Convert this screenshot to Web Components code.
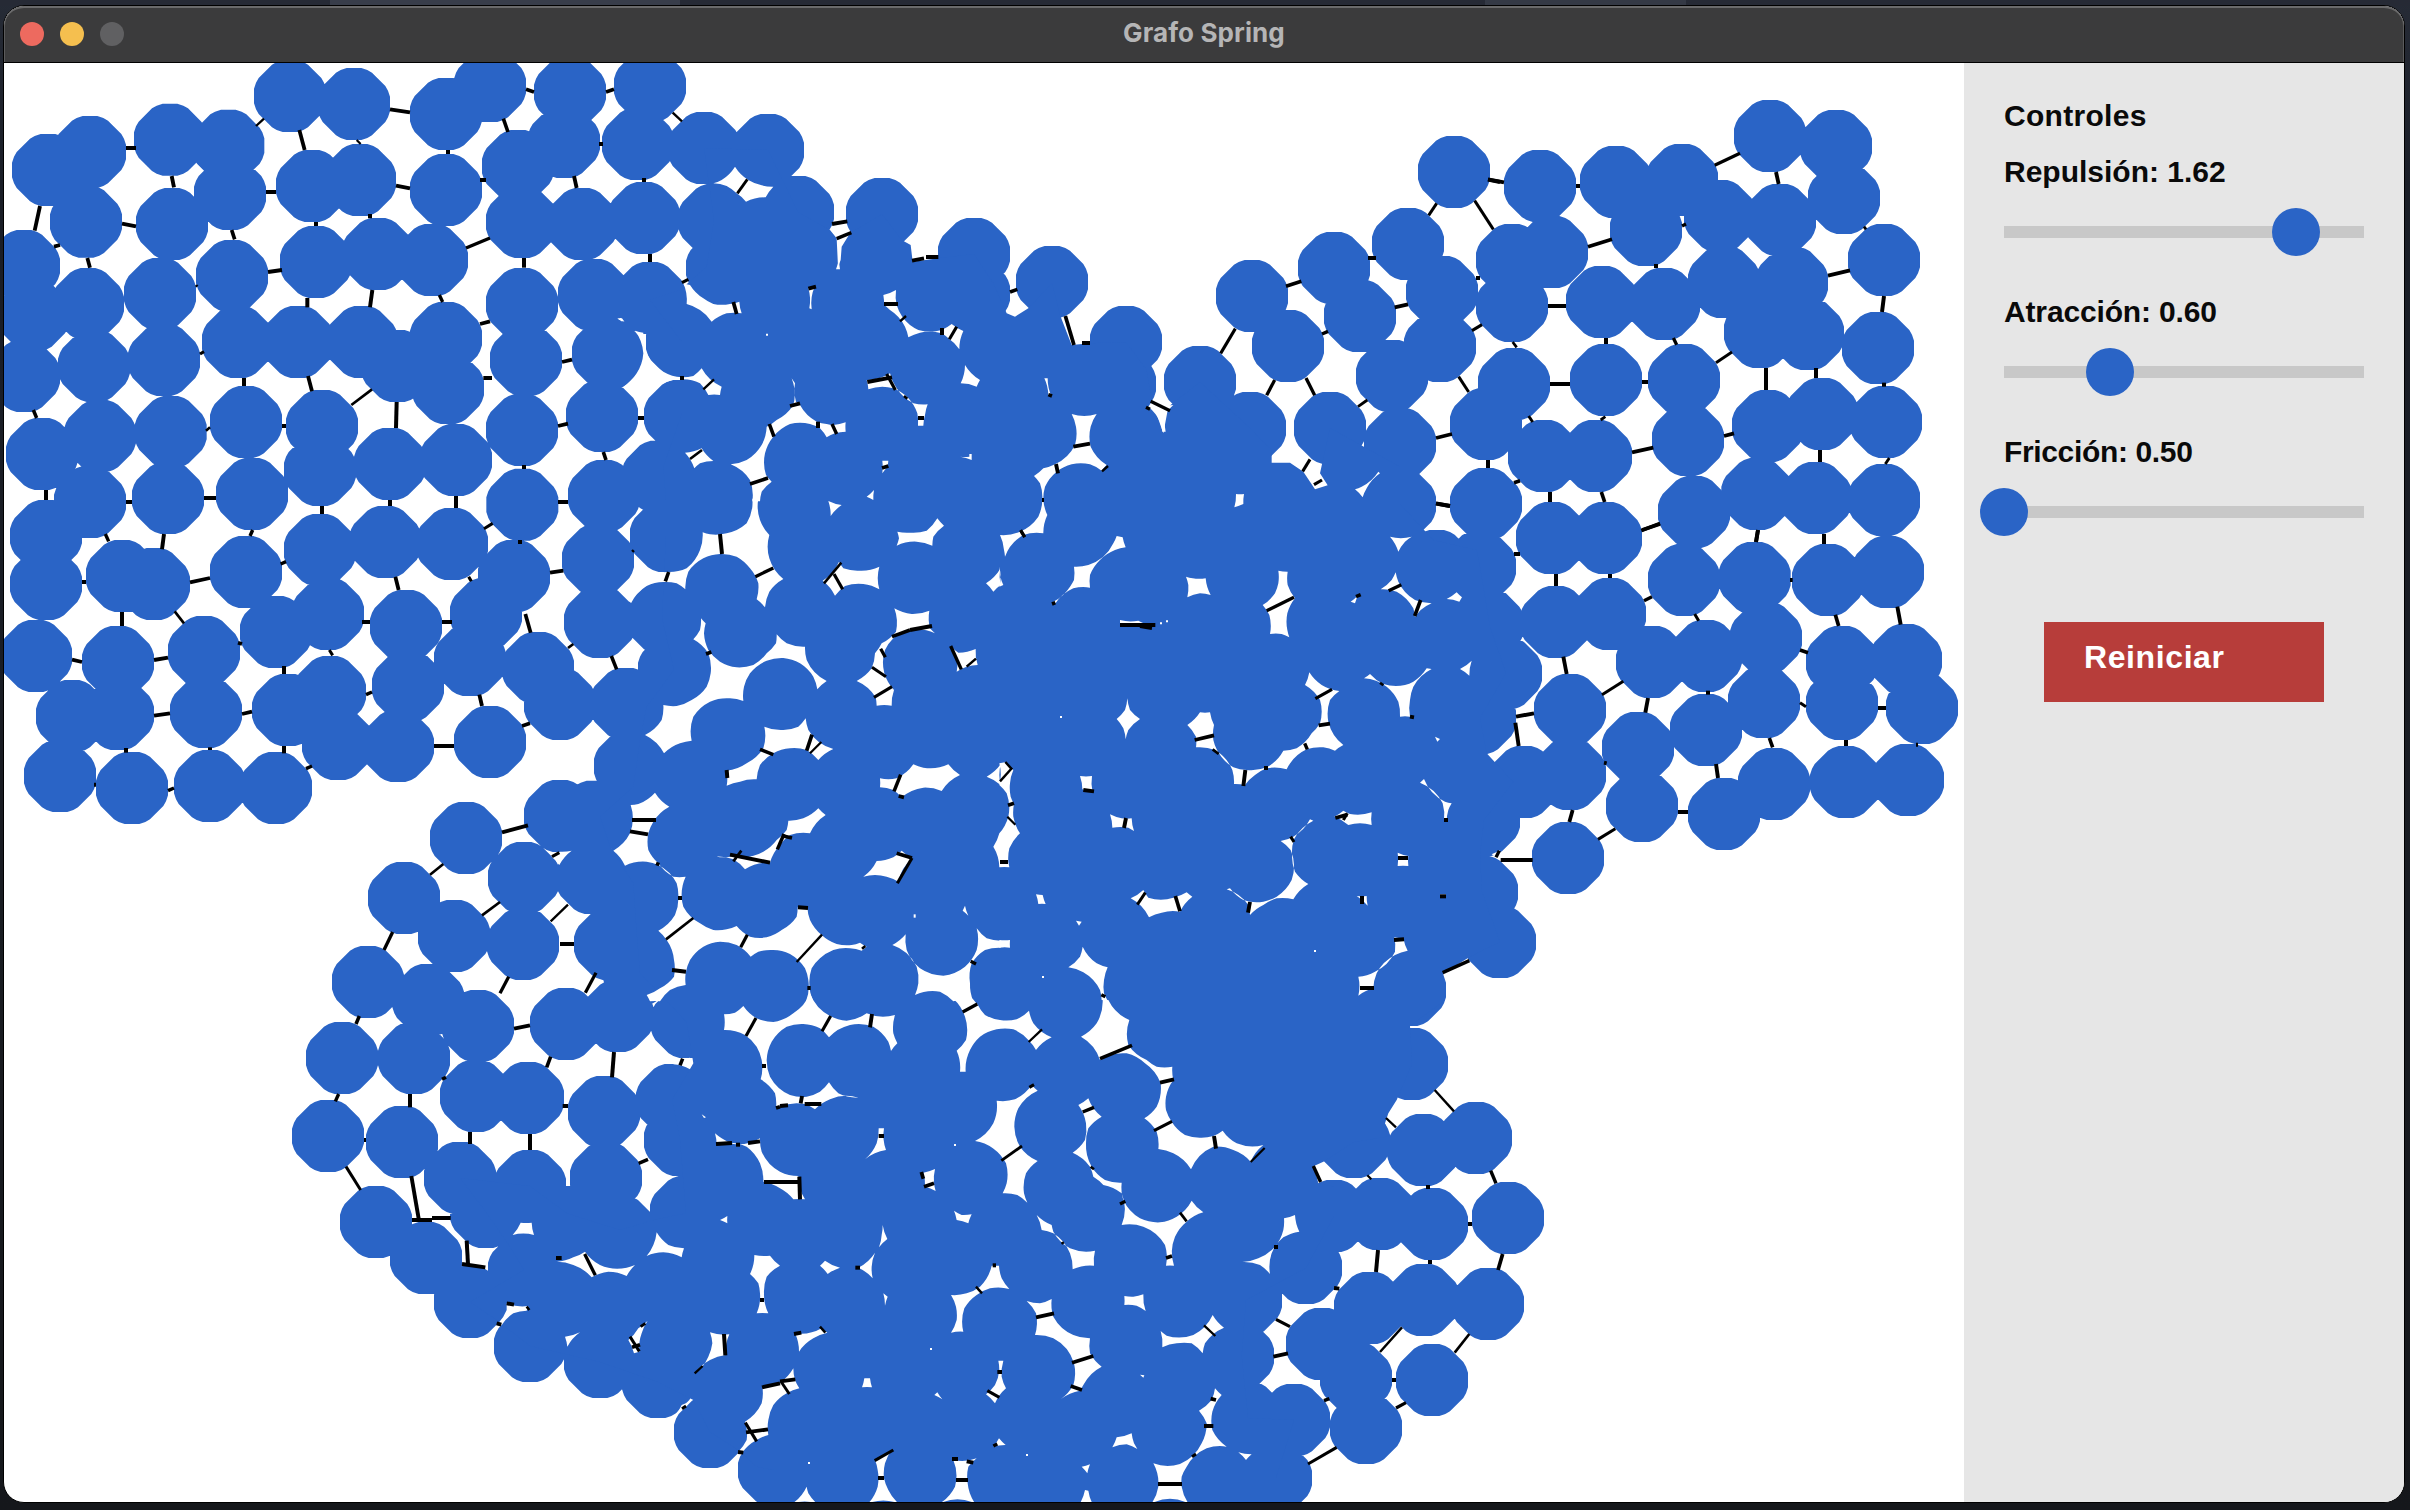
<!DOCTYPE html>
<html lang="es">
<head>
<meta charset="utf-8">
<title>Grafo Spring</title>
<style>
html,body{margin:0;height:100%;overflow:hidden}
body{background:#15171b;font-family:"Liberation Sans",Arial,sans-serif}
</style>
</head>
<body>
<app-desktop>
  <app-window heading="Grafo Spring">
    <spring-graph></spring-graph>
    <control-panel heading="Controles">
      <range-slider label="Repulsión" value="1.62" ratio="0.811"></range-slider>
      <range-slider label="Atracción" value="0.60" ratio="0.295" style="letter-spacing:-.15px"></range-slider>
      <range-slider label="Fricción" value="0.50" ratio="0" style="letter-spacing:-.35px"></range-slider>
      <reset-button>Reiniciar</reset-button>
    </control-panel>
  </app-window>
</app-desktop>
<script>
class Base extends HTMLElement {
  constructor() {
    super();
    this.attachShadow({ mode: 'open' });
  }
  connectedCallback() { this.shadowRoot.innerHTML = this.render(); }
}

customElements.define('app-desktop', class extends Base {
  render() {
    return `<style>
      :host{display:block;box-sizing:border-box;width:2410px;height:1510px;padding:5px 5px 7px 3px;overflow:hidden;
        background:
          linear-gradient(90deg,#262a35 330px,#383d4a 330px,#383d4a 680px,#262a35 680px,#262a35 1485px,#343945 1485px,#343945 1686px,#262a35 1686px) 0 0/100% 6px no-repeat,
          linear-gradient(#262b36,#1a1e27 12%,#191c22 60%,#15171b)}
    </style><slot></slot>`;
  }
});

customElements.define('app-window', class extends Base {
  render() {
    return `<style>
      :host{display:flex;flex-direction:column;box-sizing:border-box;width:2402px;height:1498px;border:1px solid #000;
        border-radius:21px;overflow:hidden;background:#fff}
      header{display:grid;grid-template-columns:1fr auto 1fr;align-items:center;height:57px;flex:none;box-sizing:border-box;
        background:#3b3b3c;border-bottom:1px solid #000;box-shadow:inset 0 2px 0 #6a6a6b,inset 1px 0 0 #5b5b5c,inset -1px 0 0 #5b5b5c;
        border-radius:20px 20px 0 0}
      .lights{display:flex;gap:16px;padding-left:16px}
      i{width:24px;height:24px;border-radius:50%;background:#ed6a5f}
      i+i{background:#f5bf4f} i+i+i{background:#606062}
      h1{margin:0;padding-bottom:2px;font:700 26px/30px Inter,sans-serif;letter-spacing:.1px;color:#b5b5b6}
      main{display:flex;flex:1;min-height:0}
    </style>
    <header><div class="lights"><i></i><i></i><i></i></div><h1>${this.getAttribute('heading')}</h1><span></span></header>
    <main><slot></slot></main>`;
  }
});

customElements.define('control-panel', class extends Base {
  render() {
    return `<style>
      :host{display:flex;flex-direction:column;flex:1;box-sizing:border-box;padding:35px 39px 0 40px;background:#e6e6e6}
      h2{margin:0 0 20px;font:bold 30px/36px "Liberation Sans",Arial,sans-serif;letter-spacing:.3px;color:#0a0a0a}
    </style><h2>${this.getAttribute('heading')}</h2><slot></slot>`;
  }
});

customElements.define('range-slider', class extends Base {
  render() {
    const pos = Number(this.getAttribute('ratio')) * 100;
    return `<style>
      :host{display:block;width:360px;margin-bottom:56px}
      label{display:block;font:bold 30px/36px "Liberation Sans",Arial,sans-serif;color:#0a0a0a}
      .track{position:relative;height:12px;margin-top:36px;background:#c8c8c8}
      .knob{position:absolute;left:${pos}%;top:-18px;width:48px;height:48px;margin-left:-24px;border-radius:50%;background:#2a64c6}
    </style><label>${this.getAttribute('label')}: ${this.getAttribute('value')}</label>
    <div class="track"><div class="knob"></div></div>`;
  }
});

customElements.define('reset-button', class extends Base {
  render() {
    return `<style>
      :host{display:block;margin:48px 0 0 40px}
      button{display:flex;width:280px;height:80px;border:0;padding:17px 0 0 40px;background:#b73d3a;color:#fff;
        font:bold 32px/36px "Liberation Sans",Arial,sans-serif;letter-spacing:.6px}
    </style><button><slot></slot></button>`;
  }
});

/* Geometry is stored per sector; a sector has an origin in pixels and a local unit of a third of a pixel. */
const ORIGIN = { A:[0,0], B:[500,0], C:[1000,50], D:[1480,50], E:[0,450], F:[500,500], G:[1000,500], H:[1480,500], I:[280,1000], J:[780,1000], K:[1200,1000] };

const NODES = {
A:`144,510 270,456 510,419 685,437 870,288 1062,312 1338,342 1470,258 258,665 516,672 690,582 936,558 1080,540 1338,570 72,798 264,912 480,882 696,828 948,786 1134,762 1296,780 101,946 72,1128 282,1098 492,1080 714,1026 894,1026 1085,1026 1192,1098 1338,1014 1344,1164 126,1362 300,1308 512,1296 738,1266 966,1278 960,1410 1170,1392 1368,1380`,
B:`210,276 450,258 54,498 192,426 414,432 612,444 804,450 66,666 246,672 432,654 642,660 894,636 786,702 666,804 1146,642 1422,762 66,912 282,885 450,894 78,1080 324,1062 66,1290 306,1248 546,1026 540,1248 312,1488 474,1430`,
C:`156,696 -78,730 378,876 360,1002 600,996 756,738 1002,654 1224,582 1362,366 864,888 1080,798 1326,726 1320,888 1176,978 1200,1182 1200,1362 750,1134 990,1134`,
D:`180,408 408,396 606,390 870,258 1068,288 1092,444 900,510 720,498 498,540 96,630 216,606 366,756 552,762 732,696 936,698 1212,630 840,846 984,852 1194,894 96,768 102,1002 378,990 612,990 624,1170 864,1128 1026,1092 1218,1116 192,1218 348,1218 18,1122 18,1362 642,1386 832,1332 1008,1344 1212,1350`,
E:`270,156 504,144 756,132 138,258 138,402 366,378 462,402 738,366 960,300 1156,276 1356,282 828,546 984,492 1218,528 1458,492 1542,378 1410,630 1470,876 108,618 354,636 612,606 216,798 354,792 618,786 864,780 990,726 1224,708 1014,882 1194,888 180,978 396,1014 630,1008 828,1014 1398,1164 1212,1344 1362,1458`,
F:`67,14 114,504 180,612 498,108 294,180 300,366 486,354 378,612 522,510 390,798 180,948 282,950 72,1134 276,1134 423,1197 69,1332 330,1332 415,1410`,
H:`216,114 378,114 612,240 824,234 1044,240 1224,216 0,200 -130,198 24,374 228,366 390,342 516,486 678,468 858,414 1086,486 1278,480 1326,624 1086,612 852,606 678,690 474,744 270,630 270,822 132,846 486,918 732,942 882,852 1098,846 1284,840 264,1074 60,1326 6,1176 78,520 0,654 12,960`,
I:`186,174 144,408 402,174 366,426 264,-54 445,0 594,78 588,288 744,294 858,72 1014,48 972,336 540,534 750,558 978,534 288,666 438,774 570,906 750,1038 960,1086 1134,1146 1290,1296 1482,1410 618,636 732,810 858,666 1020,694 1220,66 1176,300 1200,420 1218,636`,
K:`630,-30 636,192 828,414 670,450 462,426 924,654 696,672 540,642 402,648 864,912 672,900 510,924 318,804 366,1032 468,1134 696,1140 498,1284 282,1260 228,1434 144,1254 114,1068 138,900 60,1446`
};

const CORE = [
['B',`612,444 804,450 894,636 990,690 1010,715 1014,800 1022,780 1025,740 1050,700 1146,642 1205,720 1232,735 1238,785 1315,775 1422,762`],
['C',`-20,700 20,790 45,800 85,775 156,700 180,795 215,885 270,880 378,876 440,960 455,1050 490,1150 505,1070 600,996 750,1134 815,1200 815,1238 870,1238 910,1265 945,1318 983,1306 960,1270 990,1134 1200,1250 1200,1362 1300,1470 1430,1500`],
['H',`0,200 30,380 78,520 0,654 20,760 100,846 12,960 0,1063 6,1176 60,1326`],
['G',`1410,1370 1330,1420 1335,1500`],
['K',`630,78 636,192 590,300 565,340 555,370 560,410 462,426 370,485 342,498 355,550 402,560 402,648 318,804 138,900 125,1068 144,1254 282,1260 228,1434 228,1520`],
['I',`1482,1520 1482,1410 1430,1400 1385,1357 1290,1296 1240,1200 1134,1146 960,1086 750,1038 650,960 570,906 732,810 690,740 618,636 540,534 750,558 860,640 1020,690 1120,660 1218,640 1200,420 1176,300 1240,190 1220,66 1080,-80`],
['F',`420,1420 410,1300 400,1150 330,1040 300,950 400,860 420,720 440,620 522,510 486,354 498,108 498,0`],
['B',`490,1400 546,1240 546,1026 450,900 540,870 620,800 642,660`]
];

const HOLES = {
B:`875,1135 885,1150 888,1205 900,1215 950,1265 980,1272 1000,1275 1037,1267 1037,1295 1005,1300 980,1312 960,1285 930,1272 870,1272 820,1310 795,1360 798,1425 815,1445 785,1475 780,1504 757,1504 750,1440 692,1393 740,1380 785,1335 800,1280 830,1260 880,1215 880,1150
550,850 570,855 610,895 640,912 690,912 718,905 725,940 680,940 635,965 600,930 560,912
405,992 430,998 436,1050 490,1115 545,1132 580,1128 605,1105 665,1160 660,1185 625,1185 600,1150 550,1138 490,1150 440,1190 428,1260 425,1220 410,1190 370,1160 410,1120 430,1060
555,1358 605,1345 640,1383 600,1390 583,1405
705,500 745,540 785,556 820,560 797,592 738,605 710,580 680,558 640,550 665,540
1150,885 1188,870 1190,915 1230,975 1255,990 1325,990 1355,972 1390,993 1378,1048 1345,1015 1325,1000 1260,998 1225,1012 1215,980 1170,930 1152,915
925,865 945,858 935,928 928,925
1008,808 1020,808 1018,780 1014,790
1100,1140 1170,1120 1190,1165 1240,1210 1283,1213 1275,1245 1270,1277 1254,1277 1252,1240 1180,1165 1105,1168
1395,1095 1440,1140 1430,1160 1382,1150
1147,1382 1165,1382 1163,1400 1147,1420
1380,1370 1408,1370 1408,1362 1415,1362 1415,1380
1100,1490 1122,1470 1120,1500
798,1001 804,1001 804,1007 798,1007
352,955 366,955 372,964 364,964`,
C:`445,1070 455,1055 520,1065 498,1090 497,1145 487,1145 480,1115
215,1092 290,1092 272,1130 272,1190 320,1245 305,1262 270,1243 215,1243 170,1265 135,1310 130,1350 142,1395 130,1450 70,1455 15,1520 12,1500 0,1455 60,1445 115,1400 127,1350 120,1300 102,1278 130,1255 165,1243 225,1185 228,1130
133,985 143,985 155,1040 145,1035
708,1332 732,1332 730,1362 715,1368 703,1372
1065,1318 1085,1310 1135,1265 1140,1270 1100,1315 1088,1342
1170,1460 1235,1460 1215,1475 1195,1505`,
F:`355,270 400,235 402,170 440,210 500,216 560,205 600,150 608,97 630,103 680,100 740,70 757,20 757,-4 775,-4 780,60 808,105 808,175 850,237 808,275 795,322 770,298 775,250 750,205 710,170 660,162 610,175 565,215 556,268 530,250 490,246 440,258 393,310
435,705 485,660 490,615 530,618 575,600 620,560 632,520 625,460 580,418 600,390 603,355 617,370 612,400 625,450 660,485 710,502 760,495 800,460 828,430 830,403 860,430 915,440 920,480 980,543 952,568 940,530 900,490 850,474 800,482 750,520 732,560 730,603 690,595 630,605 580,650 575,722 540,730 492,760
392,915 415,912 465,878 508,920 460,965 445,1000 445,1050 475,1090 520,1130 557,1130 545,1190 550,1220 600,1270 640,1290 680,1288 710,1278 750,1310 800,1312 845,1290 890,1250 893,1222 922,1222 930,1260 965,1305 1010,1332 1055,1335 1080,1328 1100,1340 1085,1352 1050,1345 1000,1350 960,1375 935,1405 928,1450 940,1504 918,1504 925,1440 915,1405 870,1362 820,1350 775,1355 752,1370 710,1335 660,1325 610,1340 570,1380 557,1420 557,1455 510,1470 480,1504 450,1504 440,1485 480,1465 522,1430 522,1380 500,1320 475,1292 525,1245 535,1190 530,1150 475,1095 440,1085 375,1097 340,1052 390,1000
155,1070 180,1055 215,1052 178,1095
985,3 1025,15 992,48
1192,95 1230,98 1280,92 1312,55 1332,77 1300,110 1297,137 1250,125 1190,137 1197,115
968,242 1017,185 1030,205 1080,212 1138,200 1138,268 1090,252 1035,258 1005,287
1458,250 1500,208 1502,255 1480,275
1183,325 1235,342 1288,332 1290,385 1305,400 1230,390 1180,415 1155,450 1153,520 1182,570 1175,617 1130,617 1127,592 1070,543 1115,505 1125,460 1145,430 1188,395
1352,438 1375,458 1427,447 1433,495 1400,500 1370,515 1372,480
793,680 850,690 895,680 917,655 925,690 1000,747 955,780 920,750 870,745 820,760 780,795 770,838 720,845 680,857 680,812 740,790 790,745
1140,835 1190,835 1240,793 1270,803 1345,793 1380,825 1325,873 1270,863 1205,892 1180,870 1140,862
1460,830 1502,793 1502,855
650,1070 700,1068 790,1055 830,1020 860,990 865,962 910,955 955,925 977,945 930,1000 870,1005 840,1035 810,1088 735,1108 700,1078
1090,1130 1130,1083 1180,1072 1205,1052 1237,1075 1195,1145 1160,1130
1395,1217 1405,1247 1388,1232
1241,1243 1247,1243 1247,1253 1241,1253
1430,1285 1460,1315 1502,1322 1502,1343 1455,1350 1415,1390 1410,1450 1420,1504 1360,1504 1320,1475 1245,1485 1255,1450 1250,1400 1177,1335 1217,1303 1220,1350 1260,1405 1330,1427 1395,1400 1430,1350`,
G:`222,200 265,195 340,130 350,108 368,112 377,142 345,150 300,180 270,225 270,263 220,265 165,312 160,305 210,260 222,240
558,230 578,235 617,235 632,285 600,280 562,292 565,255
835,212 863,215 863,255 885,295 862,340 862,390 868,412 845,402 810,402 808,345 788,315 825,280 835,250
360,360 415,362 440,372 455,385 360,375
1052,305 1075,285 1065,310
1142,268 1175,240 1187,217 1195,245 1245,300 1295,310 1262,330 1245,352 1240,325 1190,275
1340,297 1370,277 1386,292 1378,305
1380,507 1415,482 1408,527
1092,535 1110,522 1150,552 1215,555 1240,545 1280,505 1295,507 1240,560 1230,600 1230,650 1200,650 1195,605 1160,560
350,657 375,630 382,595 390,630 420,657 385,690 377,718 370,685
562,675 600,637 630,637 642,675 640,720 650,748 700,802 740,810 800,802 850,752 890,745 935,700 960,670 960,600 915,555 928,517 965,555 1018,573 990,600 985,665 1030,735 1005,752 970,742 920,748 860,808 800,805 765,825 735,855 702,852 697,810 645,750 588,742 588,710
240,828 276,828 278,878 247,868
330,943 365,955 395,955 402,993 385,983 337,983
1003,950 1030,932 1050,942 1115,937 1115,975 1045,975
842,1023 880,1010 930,958 940,962 882,1018 876,1065 885,1115 925,1152 880,1198 830,1195 790,1215 750,1245 745,1215 680,1168 690,1165 730,1200 790,1205 830,1190 875,1140 872,1050
1260,848 1272,837 1335,905 1355,910 1345,930 1340,965 1332,960 1328,910
1193,1058 1225,1068 1225,1098 1193,1098
1070,1188 1100,1188 1103,1217
1320,1183 1338,1183 1338,1193 1320,1193
392,1195 430,1170 445,1193 520,1193 560,1177 577,1190 540,1235 485,1238 447,1252
108,1183 128,1185 137,1212 115,1212
-2,1320 30,1320 30,1343 -2,1343
205,1402 240,1370 248,1340 290,1390 323,1402 312,1440 312,1480 322,1500 305,1500 300,1470 250,1417
1075,1487 1075,1430 1125,1415 1185,1355 1183,1312 1210,1315 1223,1352 1185,1365 1130,1420 1120,1465
228,1262 245,1265 237,1277
-2,790 15,787 40,810 30,850 32,890 42,912 40,950 60,1000 28,1045 25,1085 28,1102 -2,1102 -20,1040 -2,1000 25,950 20,880 -2,855
-2,200 10,255 -2,260
1305,710 1320,717 1312,725
180,648 186,648 186,654 180,654
942,1350 948,1350 948,1356 942,1356
126,1428 132,1428 132,1434 126,1434
480,367 486,367 486,373 480,373
498,361 504,361 504,367 498,367`,
H:`35,1063 60,1050 50,1072`,
I:`1195,178 1230,173 1230,208 1180,193
698,705 722,668 755,668 762,705
830,785 880,772 915,755 960,795 1040,803 1065,795 1040,828 985,815 935,832 880,795
680,910 745,918 740,932 700,940 665,975 655,970 680,930
855,1010 900,997 862,1040
1190,1240 1205,1215 1235,1200 1215,1225
1395,1265 1445,1210 1447,1160 1500,1148 1540,1105 1545,1140 1558,1165 1520,1180 1480,1215 1465,1260 1465,1305 1430,1320 1385,1360 1375,1355 1400,1320
1332,43 1365,38 1390,18 1430,55 1480,66 1540,40 1590,-20 1650,48 1700,62 1760,40 1845,45 1840,100 1852,130 1833,153 1825,125 1780,80 1710,75 1647,112 1620,85 1570,72 1520,80 1475,125 1460,180 1470,230 1530,285 1580,290 1620,275 1647,247 1675,280 1735,293 1650,298 1605,328 1575,312 1500,320 1488,325 1485,280 1442,238 1445,180 1430,140 1395,105 1332,90
1305,400 1325,415 1360,432 1440,415 1445,455 1500,515 1555,528 1575,598 1540,598 1500,565 1450,545 1440,490 1400,440 1310,435
1320,660 1342,648 1342,670
1130,697 1165,735 1212,745 1205,772 1150,757 1100,768 1120,735
1423,765 1470,767 1500,797 1460,830 1452,880 1465,940 1430,940 1440,880 1435,850 1410,822
1045,1020 1075,985 1103,962 1085,1000 1078,1055 1062,1060
1290,997 1348,1003 1337,1065 1290,1080 1245,1120 1285,1070 1297,1030
1265,343 1278,352 1272,354`,
J:`520,-4 578,-4 592,12 615,45 660,60 710,58 747,32 760,70 815,112 768,150 745,120 700,88 650,88 600,110 570,150 557,215 540,215 530,152 558,120 555,50
968,0 985,0 1048,60 1045,135 1100,180 1130,200 1177,200 1180,240 1158,290 1158,330 1175,365 1215,405 1260,413 1300,408 1328,392 1370,430 1450,435 1412,485 1360,450 1300,440 1233,508 1180,460 1135,447 1130,395 1093,355 1130,320 1142,250 1095,190 1040,160 960,180 903,110 950,70
296,385 312,385 318,450 255,478 290,430
650,302 705,298 755,255 773,272 715,325 703,380 720,440 773,483 738,520 732,580 742,608 712,585 668,580 680,550 678,490 585,423 640,370
895,315 925,295 940,325 965,350 925,385 918,430 935,500 975,540 1025,548 1030,600 1080,655 1140,667 1190,650 1235,602 1270,637 1220,665 1185,710 1182,797 1158,797 1155,735 1090,680 1025,675 1025,580 970,555 940,530 930,500 878,458 915,420 918,370
430,518 465,507 462,550 467,573 435,560
522,632 545,645 575,643 565,670 530,660
770,645 815,675 820,695 870,745 945,752 942,797 878,808 870,760 820,700 785,690
308,675 322,717 297,742 305,705
235,803 285,758 275,800 278,835
120,797 135,782 180,803 143,822
310,880 323,890 315,917
635,797 657,797 665,835 688,867 630,865 590,885 553,925 550,995 513,998 530,960 528,920 513,885 560,880 600,860
740,903 780,910 815,897 820,950 880,1005 930,1015 930,1060 965,1100 910,1155 900,1172 843,1197 880,1155 882,1090 820,1015 765,1005 768,940
1033,888 1060,890 1090,883 1097,933 1070,917 1033,915
1142,993 1160,1007 1240,1005 1298,945 1332,983 1275,1030 1268,1060 1235,1030 1190,1030 1147,1042
45,1000 125,985 142,998 100,1015 57,1055
655,1082 670,1082 665,1130 678,1165 645,1210 618,1183 645,1155 658,1110
253,1135 270,1135 276,1162 246,1162
463,1185 472,1177 487,1198
1080,1124 1093,1126 1090,1133
640,1340 657,1315 677,1335
997,1342 1010,1312 1055,1300 1062,1330 1072,1347 1040,1333
1305,1165 1325,1185 1297,1235 1297,1290 1340,1340 1280,1345 1220,1400 1205,1430 1205,1460 1225,1510 1115,1510 1135,1460 1120,1390 1200,1392 1265,1330 1280,1270 1257,1232 1295,1200
285,1380 335,1350 315,1390 312,1435 325,1470 355,1510 265,1510 293,1460 293,1410
520,1380 590,1375 565,1400 563,1450 585,1510 480,1510 525,1460
905,1400 930,1393 922,1420
915,1470 925,1472 937,1510 900,1510
80,1460 85,1480 110,1510 38,1510
1375,1357 1415,1363 1398,1380
522,432 528,432 528,438 522,438
450,1044 456,1044 456,1050 450,1050
84,1386 90,1386 90,1392 84,1392
738,1362 744,1362 744,1368 738,1368`,
K:`252,655 285,645 298,695 250,712 215,760 210,822 180,795 127,786 175,775 225,740 250,690`
};

const EDGES = {
A:`378,444,408,444;515,528,522,562;768,378,792,356;898,390,914,450;1070,420,1082,432;1170,328,1230,337;1344,450,1344,462;120,618,104,692;366,671,408,679;162,740,180,735;262,774,270,803;798,576,828,576;1188,557,1230,565;1110,642,1110,655;948,666,948,678;695,690,704,718;804,816,846,810;1398,744,1470,714;588,855,592,860;922,894,922,922;1117,870,1110,922;1318,885,1328,906;1440,972,1470,964;1450,1134,1476,1134;600,1062,612,1055;732,1134,732,1158;924,1128,936,1174;1054,1215,1116,1168;1190,1206,1188,1284;100,1230,110,1254;618,1292,630,1282;846,1278,858,1278;1440,540,1458,540`,
B:`78,268,102,276;318,276,342,268;10,356,24,396;518,338,546,364;303,426,303,438;222,528,230,564;432,534,432,546;712,580,742,538;996,672,1042,664;1010,716,1054,698;1236,782,1272,775;1278,771,1315,771;72,774,72,803;450,762,450,786;546,848,565,838;700,906,710,942;925,866,948,860;1152,912,1194,912;1200,964,1218,948;1326,984,1326,1005;1348,1018,1370,980;186,1086,216,1079;540,1134,552,1134;610,1168,642,1138;870,1218,900,1210;1102,1146,1176,1132;1160,1122,1186,1170;1212,1188,1222,1196;1254,1254,1272,1254;174,1278,204,1271;414,1254,432,1254;310,1356,318,1380;808,1272,822,1310;954,1265,954,1284;996,1272,1010,1302;570,1377,606,1350;750,1452,804,1434;1146,1404,1165,1398;66,1401,78,1401`,
C:`30,726,52,718;196,798,222,885;246,879,270,879;662,910,706,836;858,709,904,694;1104,624,1128,624;1286,496,1310,460;1424,452,1480,538;1464,389,1500,396;966,852,984,844;1184,772,1224,763;1428,684,1440,684;1416,842,1446,824;1376,980,1406,1026;800,1036,824,990;918,984,944,1036;1074,1070,1102,1050;452,1054,510,1082;438,1072,450,1078;145,1034,156,1038;220,1190,270,1181;168,1242,174,1270;306,1264,324,1248;908,1264,930,1228;942,1304,966,1290;1308,1164,1356,1152;1464,1230,1464,1254;1308,1360,1350,1368;62,1440,74,1460;126,1350,132,1350`,
D:`24,388,72,397;288,408,300,408;704,346,780,310;888,366,896,402;324,590,396,568;606,528,618,522;522,648,534,648;1152,530,1158,538;1044,677,1110,661;1212,738,1206,786;204,768,258,768;378,864,378,882;580,864,590,884;98,876,110,892;708,938,756,906;858,954,858,1020;1008,954,1008,984;210,1002,270,1002;486,996,504,996;1206,1004,1218,1004;146,1098,158,1116;362,1110,376,1100;732,1158,762,1150;456,1207,520,1193;1020,1200,1020,1236;1216,1242,1228,1224;24,1230,24,1254;102,1298,120,1292;210,1326,210,1356;364,1326,374,1356;486,1440,540,1422;834,1440,828,1476;1032,1452,1032,1482`,
E:`138,120,138,150;378,156,396,156;612,144,648,144;966,168,966,192;1170,150,1170,168;1368,138,1368,174;1452,236,1478,220;316,252,326,274;492,252,486,298;750,258,758,240;842,342,858,335;1186,380,1196,420;1406,380,1414,394;246,396,258,396;570,397,630,384;366,486,366,528;524,484,552,520;1086,516,1110,516;1326,516,1356,516;714,578,726,582;216,629,246,636;462,630,504,623;988,600,998,616;852,648,852,672;1098,734,1116,726;1438,734,1446,768;462,797,510,790;726,792,756,785;378,894,378,908;630,892,630,900;852,888,852,910;918,956,936,948;1302,888,1362,888;504,1022,522,1014;282,1004,288,1004;1290,1274,1330,1242;1446,1396,1500,1356;1152,1500,1178,1446`,
F:`174,6,204,6;54,126,66,126;150,218,190,212;76,342,92,398;204,444,220,432;334,468,350,508;496,244,506,216;660,102,666,162;766,230,820,204;972,250,1024,188;1002,222,1028,268;1176,410,1230,390;1230,390,1296,378;1142,446,1156,472;1116,502,1158,530;1122,592,1176,560;1352,438,1384,508;1400,500,1428,476;618,462,634,456;66,678,90,670;6,997,84,976;156,1070,178,1058;780,748,820,764;936,704,920,752;930,760,964,726;680,810,682,834;1202,824,1182,874;1196,888,1212,892;396,960,468,960;390,994,444,1003;690,1064,810,1088;700,1084,724,1052;832,1048,852,1002;850,1008,876,1014;1190,1060,1236,1074;1236,1074,1192,1150;534,1194,546,1194;152,1264,204,1214;498,1318,580,1254;894,1222,924,1224;180,1332,222,1332;722,1342,742,1304;890,1386,966,1304;1086,1346,1096,1338;1412,1384,1428,1392;256,1478,288,1418;0,1480,26,1430;516,1410,558,1415;922,1464,932,1464;396,150,402,156;468,1090,478,1094`,
G:`62,92,74,112;156,312,166,308;360,375,466,375;420,378,456,384;800,332,882,292;1166,272,1204,254;1244,348,1262,300;1308,11,1350,18;1068,290,1082,284;946,596,996,568;956,676,990,671;584,720,642,706;638,748,656,762;736,810,730,858;792,804,804,804;914,730,922,748;1140,548,1150,556;1230,650,1242,652;250,870,282,874;378,954,372,984;1006,954,1042,944;1030,960,1042,940;0,844,36,804;16,786,36,808;24,916,42,910;22,950,46,974;0,1086,24,1086;872,1010,882,1026;1332,960,1344,960;1194,1074,1224,1074;1086,1188,1086,1212;1320,1189,1338,1189;412,1214,436,1178;526,1188,540,1234;750,1206,744,1238;1182,1320,1212,1318;1080,1464,1122,1464;1328,1418,1408,1382;304,1484,316,1490`,
H:`484,92,540,70;102,162,120,162;834,90,828,126;1032,102,1032,132;228,222,228,258;390,222,390,234;930,240,938,240;492,302,516,290;644,342,656,362;1066,344,1076,378;1252,320,1262,374;960,450,984,458;250,470,260,522;366,584,430,544;504,594,496,638;678,578,690,578;960,608,978,620;1194,624,1218,624;108,650,162,640;106,668,116,738;868,714,878,742;1098,720,1098,738;1308,734,1314,734;708,792,714,834;594,936,624,936;278,930,268,966;354,1018,406,986;62,1080,158,1080;48,1072,58,1052;372,788,380,790`,
I:`228,72,238,48;166,304,176,282;390,282,390,322;702,86,750,76;800,202,812,170;1002,156,996,232;486,238,498,232;848,318,864,318;570,396,570,432;750,402,750,450;1076,490,1104,478;252,420,258,420;198,500,242,570;394,528,416,656;396,660,456,660;456,654,512,654;560,722,564,792;546,792,616,802;828,774,845,774;914,762,946,826;1398,108,1428,54;1200,196,1208,176;1446,198,1458,198;1488,324,1500,320;1308,432,1356,429;1368,434,1380,434;1404,429,1440,424;1452,546,1560,546;1558,530,1560,598;1440,900,1452,900;1332,1002,1336,1066;1244,1120,1268,1098;1050,1010,1078,1054;1056,1042,1080,1034;1082,980,1096,970;1206,1226,1218,1218;680,910,702,914;740,920,748,930;650,970,664,974;1446,1162,1500,1150;1396,1268,1430,1324;1398,1297,1464,1288;1374,1356,1390,1358`,
J:`126,94,152,48;276,42,270,82;548,36,592,12;746,126,786,88;960,176,1056,136;66,288,62,310;74,312,124,312;0,318,24,316;296,408,312,408;748,262,762,254;908,336,942,322;664,482,726,438;1140,248,1182,238;1122,392,1176,364;1302,408,1308,446;1412,486,1454,444;424,516,430,536;432,560,462,550;1020,612,1036,604;1200,638,1220,664;1158,774,1176,768;932,500,942,508;226,803,240,803;588,860,606,880;768,952,822,940;876,1088,940,1068;872,1158,906,1170;42,1002,64,998;120,980,136,998;0,1144,46,1138;4,1146,28,1182;652,1116,666,1116;622,1172,658,1192;1272,976,1306,1008;284,1382,340,1350;294,1434,312,1434;516,1377,534,1377;560,1384,580,1388;528,1440,564,1440;1134,1452,1206,1452;1236,1370,1248,1362;1272,1278,1300,1278;1292,1196,1308,1200;638,796,648,796;640,1338,652,1332;846,726,850,732`,
K:`704,270,762,334;558,354,588,382;872,512,888,550;340,498,362,546;502,526,514,538;678,561,690,561;804,672,816,672;908,762,894,810;534,750,528,816;690,780,690,792;222,741,234,741;402,864,418,866;228,958,270,980;220,1070,264,1060;540,1056,606,982;764,1058,808,1002;576,1140,588,1140;588,1224,618,1208;372,1202,388,1196;324,1392,410,1342`
};

customElements.define('spring-graph', class extends Base {
  /* Local sector point to stage units (thirds of a pixel). */
  at(sector, x, y) { return [ORIGIN[sector][0] * 3 + x, ORIGIN[sector][1] * 3 + y]; }
  points(sector, text) { return text.trim().split(/\s+/).map(p => this.at(sector, ...p.split(',').map(Number))); }
  ring(points) { return 'M' + points.map(p => p.join(' ')).join('L') + 'Z'; }
  /* A gap between nodes: its sides follow the node rims, so they bulge into the gap. */
  gap(points) {
    let area = 0;
    points.forEach(([x, y], i) => {
      const [u, v] = points[(i + 1) % points.length];
      area += x * v - u * y;
    });
    const sweep = area > 0 ? 0 : 1;
    let d = 'M' + points[0].join(' ');
    points.forEach(([x, y], i) => {
      const [u, v] = points[(i + 1) % points.length];
      const len = Math.hypot(u - x, v - y);
      d += len > 20 && len < 130 ? `A125 125 0 0 ${sweep} ${u} ${v}` : `L${u} ${v}`;
    });
    return d + 'Z';
  }
  render() {
    /* One quarter of the rim, clockwise from the top edge to the right edge. */
    const quarter = [[22,-108],[40,-102],[54,-94],[94,-54],[102,-40],[108,-22]];
    const disc = [0, 1, 2, 3].flatMap(turn => quarter.map(([x, y]) => {
      for (let i = 0; i < turn; i++) [x, y] = [-y, x];
      return [x, y];
    }));
    let nodes = '', holes = '', edges = '';
    for (const s in NODES)
      for (const [cx, cy] of this.points(s, NODES[s])) nodes += this.ring(disc.map(([x, y]) => [cx + x, cy + y]));
    const core = this.ring(CORE.flatMap(([s, text]) => this.points(s, text)));
    for (const s in HOLES)
      for (const row of HOLES[s].split('\n')) holes += `<path d="${this.gap(this.points(s, row))}"/>`;
    for (const s in EDGES)
      for (const row of EDGES[s].split(';')) {
        const [a, b, c, d] = row.split(',').map(Number);
        const [x1, y1] = this.at(s, a, b), [x2, y2] = this.at(s, c, d);
        const len = Math.hypot(c - a, d - b) || 1;
        const w = 12 * Math.pow(Math.max(Math.abs(c - a), Math.abs(d - b)) / len, 1.7);
        edges += `<path d="M${x1} ${y1}L${x2} ${y2}" stroke-width="${w.toFixed(1)}"/>`;
      }
    return `<style>:host{display:block;width:1960px;flex:none;overflow:hidden}svg{display:block;width:100%;height:100%}</style>
    <svg viewBox="12 189 5880 4317" preserveAspectRatio="xMinYMin slice">
      <path d="${nodes}" fill="#2a64c6"/><path d="${core}" fill="#2a64c6"/>
      <g fill="#fff">${holes}</g><g stroke="#000" fill="none">${edges}</g>
    </svg>`;
  }
});
</script>
</body>
</html>
